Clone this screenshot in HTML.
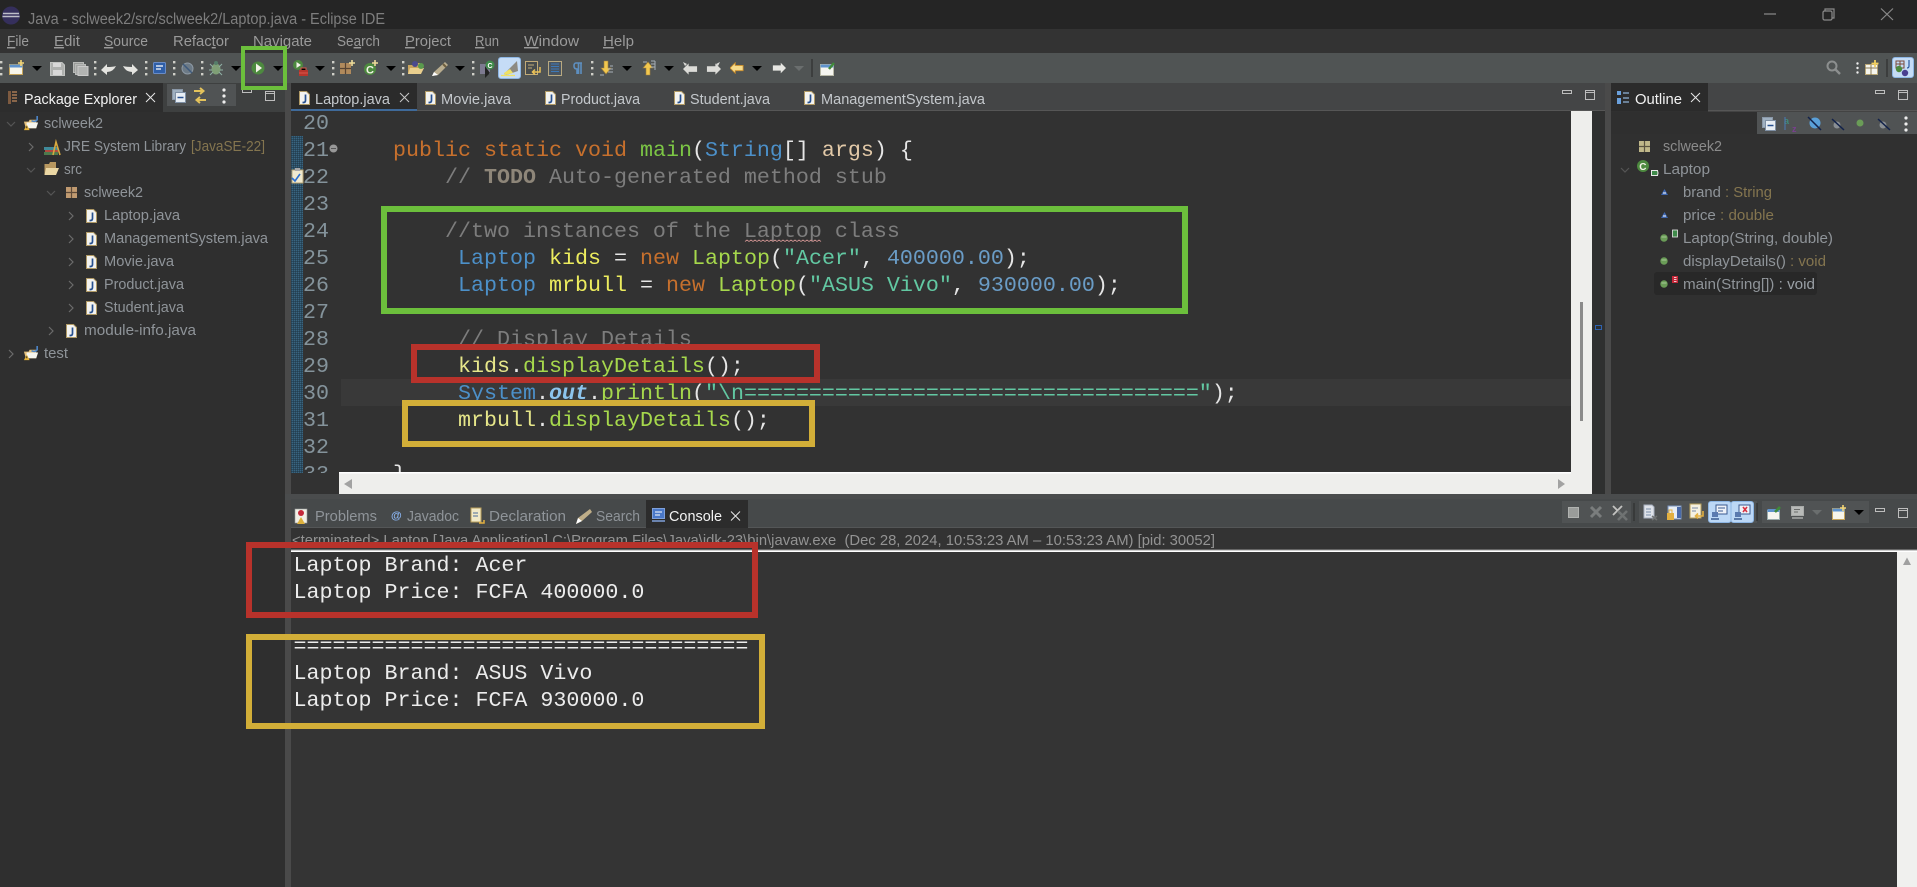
<!DOCTYPE html>
<html lang="en">
<head>
<meta charset="utf-8">
<title>Java - sclweek2/src/sclweek2/Laptop.java - Eclipse IDE</title>
<style>
html,body{margin:0;padding:0;background:#303030;overflow:hidden;width:1917px;height:887px}
svg{display:block}
text{white-space:pre}
.s{font-family:"Liberation Sans",sans-serif;font-size:14.5px;fill:#8f9499}
.m{font-family:"Liberation Sans",sans-serif;font-size:14.5px;fill:#9a9a9a}
.w{font-family:"Liberation Sans",sans-serif;font-size:14.5px;fill:#f2f2f2}
.e{font-family:"Liberation Sans",sans-serif;font-size:14.5px;fill:#c4c8cc}
.o{font-family:"Liberation Sans",sans-serif;font-size:14.5px;fill:#84754f}
.c{font-family:"Liberation Mono",monospace;font-size:21.667px;fill:#e6e6e6}
.n{fill:#84939b}
.k{fill:#c7702d}
.cm{fill:#7d7d7d}
.ty{fill:#4c90c9}
.v{fill:#ecec5e}
.f{fill:#a6d84c}
.st{fill:#62c8a2}
.nu{fill:#6a9cc6}
</style>
</head>
<body>
<svg xmlns="http://www.w3.org/2000/svg" width="1917" height="887" viewBox="0 0 1917 887">
<defs>
<pattern id="hatch" width="2" height="2" patternUnits="userSpaceOnUse"><rect width="2" height="2" fill="#2a4c62"/><rect width="1" height="1" fill="#3a6580"/><rect x="1" y="1" width="1" height="1" fill="#253f50"/></pattern>
<symbol id="file" viewBox="0 0 11 14" overflow="visible"><path d="M.5.5H7.5L10.5 3.5V13.5H.5Z" fill="#f3f3f0" stroke="#b09a66"/><path d="M6.5 3.5V9.5Q6.5 11.5 4.5 11.5H3.5" fill="none" stroke="#27508f" stroke-width="1.7"/></symbol>
<symbol id="minb" viewBox="0 0 10 5"><rect x=".5" y=".5" width="9" height="3" fill="none" stroke="#bdbdbd"/></symbol>
<symbol id="maxb" viewBox="0 0 10 10"><rect x=".5" y=".5" width="9" height="9" fill="none" stroke="#bdbdbd"/><path d="M0 2.5H10" stroke="#bdbdbd"/></symbol>
<symbol id="dots" viewBox="0 0 3 16"><rect x="0" y="0" width="2.4" height="2.4" fill="#cfcfc8"/><rect x="0" y="6" width="2.4" height="2.4" fill="#cfcfc8"/><rect x="0" y="12" width="2.4" height="2.4" fill="#cfcfc8"/></symbol>
<symbol id="vdots" viewBox="0 0 4 16"><circle cx="2" cy="2" r="1.6" fill="#eee"/><circle cx="2" cy="8" r="1.6" fill="#eee"/><circle cx="2" cy="14" r="1.6" fill="#eee"/></symbol>
<symbol id="drop" viewBox="0 0 10 5"><path d="M0 0H10L5 5Z" fill="#000"/></symbol>
<symbol id="proj" viewBox="0 0 18 18"><path d="M1 7H6L7 5H14V14H3Z" fill="#e6c27c"/><path d="M4 8H16L14 14H3Z" fill="#f5f5ee"/><path d="M9 6Q13 8 15 5V1" fill="none" stroke="#4d86c8" stroke-width="1.7"/><path d="M4 10L7 16H1Z" fill="#e7b53a"/><path d="M4 12V14" stroke="#222"/></symbol>
<symbol id="chev" viewBox="0 0 6 10"><path d="M1 1L5 5L1 9" fill="none" stroke="#6b6b6b" stroke-width="1.2"/></symbol>
<symbol id="chevd" viewBox="0 0 10 6"><path d="M1 1L5 5L9 1" fill="none" stroke="#555" stroke-width="1.2"/></symbol>
<symbol id="collapse" viewBox="0 0 14 14"><rect x=".5" y=".5" width="10" height="10" fill="#9fb0c0" stroke="#8a98a8"/><rect x="3.5" y="3.5" width="10" height="10" fill="#e8eef4" stroke="#7f90a5"/><path d="M5.5 8.5H11.5" stroke="#27508f" stroke-width="1.5"/></symbol>
<symbol id="arrow" viewBox="0 0 16 12"><path d="M0 6L6 0V3H15V9H6V12Z"/></symbol>
<symbol id="gb" viewBox="0 0 10 10"><circle cx="5" cy="5" r="3.7" fill="#6a9c57"/><path d="M2.5 4H7.5" stroke="#a8ca98"/></symbol>
</defs>

<!-- base -->
<rect width="1917" height="887" fill="#303030"/>
<rect y="0" width="1917" height="29" fill="#252525"/>
<rect y="29" width="1917" height="24" fill="#333333"/>
<rect y="53" width="1917" height="30" fill="#505454"/>

<!-- title bar -->
<circle cx="11" cy="15.500" r="9" fill="#352f5c"/><path d="M3 13.500H19M2.500 16.500H19.500" stroke="#bdbdc8" stroke-width="1.5"/>
<text x="28" y="24" class="m" style="font-size:15.5px;fill:#7e7e7e" textLength="357" lengthAdjust="spacingAndGlyphs">Java - sclweek2/src/sclweek2/Laptop.java - Eclipse IDE</text>
<path d="M1764 14H1776" stroke="#8a8a8a" stroke-width="1.2"/>
<rect x="1823" y="11" width="9" height="9" rx="1.5" fill="none" stroke="#8a8a8a" stroke-width="1.2"/><path d="M1825 11V9H1834V18H1832" fill="none" stroke="#8a8a8a" stroke-width="1.2"/>
<path d="M1881 8.500L1893 20M1893 8.500L1881 20" stroke="#8a8a8a" stroke-width="1.2"/>

<!-- menu -->
<g class="mn">
<text x="7" y="46" class="m" textLength="22" lengthAdjust="spacingAndGlyphs"><tspan text-decoration="underline">F</tspan>ile</text>
<text x="54" y="46" class="m" textLength="26" lengthAdjust="spacingAndGlyphs"><tspan text-decoration="underline">E</tspan>dit</text>
<text x="104" y="46" class="m" textLength="44" lengthAdjust="spacingAndGlyphs"><tspan text-decoration="underline">S</tspan>ource</text>
<text x="173" y="46" class="m" textLength="56" lengthAdjust="spacingAndGlyphs">Refac<tspan text-decoration="underline">t</tspan>or</text>
<text x="253" y="46" class="m" textLength="59" lengthAdjust="spacingAndGlyphs"><tspan text-decoration="underline">N</tspan>avigate</text>
<text x="337" y="46" class="m" textLength="43" lengthAdjust="spacingAndGlyphs">Se<tspan text-decoration="underline">a</tspan>rch</text>
<text x="405" y="46" class="m" textLength="46" lengthAdjust="spacingAndGlyphs"><tspan text-decoration="underline">P</tspan>roject</text>
<text x="475" y="46" class="m" textLength="24" lengthAdjust="spacingAndGlyphs"><tspan text-decoration="underline">R</tspan>un</text>
<text x="524" y="46" class="m" textLength="55" lengthAdjust="spacingAndGlyphs"><tspan text-decoration="underline">W</tspan>indow</text>
<text x="603" y="46" class="m" textLength="31" lengthAdjust="spacingAndGlyphs"><tspan text-decoration="underline">H</tspan>elp</text>
</g>

<!-- main toolbar -->
<use href="#dots" x="0" y="61" width="3" height="16"/><use href="#dots" x="94" y="61" width="3" height="16"/><use href="#dots" x="145" y="61" width="3" height="16"/><use href="#dots" x="173" y="61" width="3" height="16"/><use href="#dots" x="201" y="61" width="3" height="16"/><use href="#dots" x="332" y="61" width="3" height="16"/><use href="#dots" x="402" y="61" width="3" height="16"/><use href="#dots" x="472" y="61" width="3" height="16"/><use href="#dots" x="591" y="61" width="3" height="16"/>
<!-- new -->
<rect x="9.500" y="64.500" width="13" height="10" fill="#f7f5ea" stroke="#c5a45a"/><rect x="9.500" y="64.500" width="13" height="3" fill="#5f93cd"/><path d="M21 60V66M18 63H24" stroke="#f5d676" stroke-width="1.6"/>
<use href="#drop" x="32" y="66" width="10" height="5"/>
<!-- save -->
<path d="M50.500 62.500H62L64.500 65V75.500H50.500Z" fill="#aeb0ae" stroke="#c2c4c2"/><rect x="53" y="63" width="8" height="4" fill="#d8d8d8"/><rect x="53" y="70" width="9" height="5" fill="#d8d8d8"/>
<!-- save all -->
<rect x="73.500" y="62.500" width="10" height="10" fill="#9a9c9a" stroke="#b8bab8"/><rect x="75.500" y="64.500" width="10" height="10" fill="#a4a6a4" stroke="#b8bab8"/><rect x="78" y="66.500" width="10" height="9" fill="#b2b4b2" stroke="#cacaca"/>
<!-- undo/redo -->
<path d="M101 70L107 75V72Q113 72 116 66Q113 67 107 67V64Z" fill="#e4e4e0"/><path d="M138 70L132 75V72Q126 72 123 66Q126 67 132 67V64Z" fill="#e4e4e0"/>
<!-- console -->
<rect x="153.500" y="62.500" width="12" height="11" rx="1" fill="#2f5fa8" stroke="#6a8cc6"/><path d="M156 66H163M156 69H161" stroke="#fff" stroke-width="1.2"/>
<!-- skip -->
<circle cx="187.500" cy="68.500" r="5.500" fill="#6c7a86" stroke="#8d99a4"/><path d="M183 64L192 73" stroke="#3e5a7c" stroke-width="1.5"/>
<!-- bug -->
<ellipse cx="216" cy="69" rx="4.500" ry="5.500" fill="#7f9f76"/><circle cx="216" cy="63" r="2" fill="#557e6a"/><path d="M210 64L213 67M222 64L219 67M209 70H212M223 70H220M210 75L213 72M222 75L219 72" stroke="#8fb0a5"/>
<use href="#drop" x="231" y="66" width="10" height="5"/>
<!-- run -->
<circle cx="258" cy="68" r="6.500" fill="#4d8a3f"/><path d="M256 63.500L262 68L256 72.500Z" fill="#f3f3e8"/>
<use href="#drop" x="273" y="66" width="10" height="5"/>
<!-- ext tools -->
<circle cx="298" cy="65" r="5" fill="#4d8a3f"/><path d="M296.500 62L301 65L296.500 68Z" fill="#f3f3e8"/><rect x="299" y="70" width="9" height="6" fill="#b8352c"/><path d="M301 70V68H306V70M299 73H308" stroke="#d8564a"/>
<use href="#drop" x="315" y="66" width="10" height="5"/>
<!-- new pkg -->
<rect x="340" y="63" width="11" height="11" fill="#b08a5c"/><path d="M345.500 63V74M340 68.500H351" stroke="#574433" stroke-width="1.2"/><path d="M352 60V66M349 63H355" stroke="#eedc9a" stroke-width="1.6"/>
<!-- new class -->
<circle cx="370" cy="69" r="6" fill="#4d8a3f"/><text x="366" y="73.500" style="font:bold 11px 'Liberation Sans',sans-serif;fill:#f3f3e8">C</text><path d="M375 60V66M372 63H378" stroke="#eedc9a" stroke-width="1.6"/>
<use href="#drop" x="386" y="66" width="10" height="5"/>
<!-- open -->
<path d="M408 74V65H413L414 63H420V74Z" fill="#c9a55f"/><path d="M410 68H424L421 74H408Z" fill="#e9cf8e"/><circle cx="415" cy="64" r="3" fill="#4a4a8e"/><circle cx="421" cy="66" r="3" fill="#5a9a4d"/>
<!-- pencil -->
<path d="M445 62L448 65L438 75L432 76L434 72Z" fill="#b9ad8f"/><path d="M432 76L434 72L438 75Z" fill="#fff"/><path d="M443 64L446 67" stroke="#6e5e3f" stroke-width="2"/>
<use href="#drop" x="455" y="66" width="10" height="5"/>
<!-- open type -->
<rect x="480" y="64" width="10" height="10" fill="#7d7a90"/><path d="M485 66V78L490 73Z" fill="#222"/><circle cx="490" cy="65" r="4.500" fill="#3f8a4a"/><text x="487.500" y="68" style="font:bold 7px 'Liberation Sans',sans-serif;fill:#fff">C</text>
<!-- highlight toggle -->
<rect x="498.500" y="57.500" width="22" height="21" rx="2.500" fill="#c5dcf6" stroke="#8db6e4"/><path d="M517 61L518 71L506 75L504 74Z" fill="#8d8a82"/><path d="M504 73L510 69L513 73L505 75Z" fill="#efe165"/><path d="M501 75.500H515" stroke="#efe165" stroke-width="1.3"/>
<!-- next annotation -->
<rect x="525.500" y="61.500" width="12" height="13" fill="#484c4c" stroke="#c2ab78"/><path d="M528 65H534M528 68H532" stroke="#c2ab78"/><path d="M540 67V72H533M535 69.500L532.500 72L535 74.500" fill="none" stroke="#ebc257" stroke-width="1.5"/>
<!-- block -->
<rect x="548.500" y="61.500" width="13" height="14" fill="#4a5560" stroke="#b8a980"/><path d="M551 64H559M551 66.500H559M551 69H559M551 71.500H559" stroke="#3d79b8"/>
<!-- pilcrow -->
<path d="M582 63H576Q574 63 574 66Q574 69 577 69V74M578.500 63.500V74M581 63.500V74" fill="none" stroke="#5d8fc0" stroke-width="1.6"/>
<!-- sort down/up -->
<path d="M604 61V68H601L606 74L611 68H608V61Z" fill="#f2c84f" stroke="#a3803a" stroke-width=".6"/><path d="M610 66H613M608 69H613M608 72H613" stroke="#a8b0b8"/><path d="M600 75H604" stroke="#a8b0b8"/>
<use href="#drop" x="622" y="66" width="10" height="5"/>
<path d="M646 75V68H643L648 62L653 68H650V75Z" fill="#f2c84f" stroke="#a3803a" stroke-width=".6"/><path d="M643 62H647M651 61H655M651 64H655M651 67H655M655 70V61" stroke="#a8b0b8"/>
<use href="#drop" x="664" y="66" width="10" height="5"/>
<g fill="#dcdcd8">
<use href="#arrow" x="683" y="63" width="15" height="12"/>
<use href="#arrow" x="-721" y="63" width="15" height="12" transform="scale(-1 1)"/>
<path d="M683 62l4 2-2 2zM720 62l-4 2 2 2z"/>
</g>
<use href="#arrow" x="730" y="62" width="14" height="12" fill="#f7dc8c" stroke="#c58a2a"/>
<use href="#drop" x="752" y="66" width="10" height="5"/>
<use href="#arrow" x="-786" y="62" width="14" height="12" fill="#e6e6e2" transform="scale(-1 1)"/>
<path d="M794 66H804L799 71Z" fill="#6a6e6e"/>
<path d="M812 59V77" stroke="#2e3030" stroke-width="1.2"/>
<rect x="820.500" y="64.500" width="13" height="11" fill="#f5f5f0" stroke="#b9b9a8"/><rect x="820.500" y="64.500" width="13" height="3" fill="#5f93cd"/><path d="M829 69L834 63" stroke="#3f8a3a" stroke-width="2.5"/>
<!-- right toolbar -->
<circle cx="1832" cy="66" r="4.500" fill="none" stroke="#8c8f8f" stroke-width="2"/><path d="M1835 69L1840 74" stroke="#8c8f8f" stroke-width="2.4"/>
<use href="#vdots" x="1856" y="60" width="3" height="16"/>
<rect x="1865.500" y="64.500" width="12" height="10" fill="#f5f5ee" stroke="#b9a878"/><path d="M1865 68H1878M1871 65V75" stroke="#8a7a55"/><path d="M1875 60V67M1871.500 63.500H1878.500" stroke="#f2d060" stroke-width="1.8"/>
<path d="M1887 59V77" stroke="#2e3030" stroke-width="1.2"/>
<rect x="1892.500" y="57.500" width="21" height="20" rx="2.500" fill="#c5dcf6" stroke="#8db6e4"/><path d="M1896 64H1904M1900 61V69M1896 61H1904V68H1896Z" fill="none" stroke="#7a4a3a"/><circle cx="1899" cy="69" r="3.200" fill="#4d8a3f"/><circle cx="1905" cy="73" r="3.200" fill="#4a3f90"/><path d="M1909 60V66Q1909 68 1907 68" fill="none" stroke="#2c5aa0" stroke-width="1.2"/>

<!-- left pane -->
<rect x="0" y="83" width="285" height="804" fill="#2f2f2f"/>
<rect x="163" y="83" width="122" height="29" fill="#3e4040"/>
<rect x="0" y="83" width="163" height="29" fill="#2d2d2d"/>
<rect x="167" y="84" width="69" height="22" fill="#505354"/>
<rect x="8" y="91" width="3" height="13" fill="#7d5a40"/><path d="M12 92H17M12 95H17M12 98H17M12 101H17" stroke="#a87a55" stroke-width="1.5"/>
<text x="24" y="104" class="w" textLength="113" lengthAdjust="spacingAndGlyphs">Package Explorer</text>
<path d="M146 93L155 102M155 93L146 102" stroke="#e8e8e8" stroke-width="1"/>
<use href="#collapse" x="172" y="89" width="14" height="14"/>
<path d="M194 91H203M200 88L203.500 91L200 94M206 100H197M200 97L196.500 100L200 103" fill="none" stroke="#e3c25b" stroke-width="2"/>
<use href="#vdots" x="222" y="88" width="4" height="16"/>
<use href="#minb" x="242" y="89" width="10" height="5"/><use href="#maxb" x="265" y="91" width="10" height="10"/>

<!-- tree -->
<use href="#chevd" x="6" y="121" width="10" height="6"/>
<use href="#proj" x="23" y="115" width="17" height="17"/>
<text x="44" y="128" class="s" textLength="59" lengthAdjust="spacingAndGlyphs">sclweek2</text>
<use href="#chev" x="28" y="142" width="6" height="10"/>
<rect x="44" y="147" width="14" height="3" fill="#3f8a9a"/><rect x="45" y="150" width="13" height="2" fill="#b04a3f"/><rect x="44" y="152" width="14" height="3" fill="#4d7a4d"/><path d="M53 155L56 142L60 155" fill="none" stroke="#d8a93f" stroke-width="1.6"/>
<text x="64" y="151" class="s" textLength="122" lengthAdjust="spacingAndGlyphs">JRE System Library</text>
<text x="191" y="151" class="o" textLength="74" lengthAdjust="spacingAndGlyphs">[JavaSE-22]</text>
<use href="#chevd" x="26" y="167" width="10" height="6"/>
<path d="M44.500 175V164H49L50 162H56V175Z" fill="#b89860"/><path d="M46 168H59L56 175H44.500Z" fill="#ebd7a4"/>
<text x="64" y="174" class="s" textLength="18" lengthAdjust="spacingAndGlyphs">src</text>
<use href="#chevd" x="46" y="190" width="10" height="6"/>
<rect x="66" y="187" width="11" height="11" fill="#c09a70"/><path d="M71.500 187V198M66 192.500H77" stroke="#5e4a38" stroke-width="1.2"/>
<text x="84" y="197" class="s" textLength="59" lengthAdjust="spacingAndGlyphs">sclweek2</text>
<use href="#chev" x="68" y="211" width="6" height="10"/><use href="#file" x="86" y="209" width="11" height="14"/>
<text x="104" y="220" class="s" textLength="76" lengthAdjust="spacingAndGlyphs">Laptop.java</text>
<use href="#chev" x="68" y="234" width="6" height="10"/><use href="#file" x="86" y="232" width="11" height="14"/>
<text x="104" y="243" class="s" textLength="164" lengthAdjust="spacingAndGlyphs">ManagementSystem.java</text>
<use href="#chev" x="68" y="257" width="6" height="10"/><use href="#file" x="86" y="255" width="11" height="14"/>
<text x="104" y="266" class="s" textLength="70" lengthAdjust="spacingAndGlyphs">Movie.java</text>
<use href="#chev" x="68" y="280" width="6" height="10"/><use href="#file" x="86" y="278" width="11" height="14"/>
<text x="104" y="289" class="s" textLength="80" lengthAdjust="spacingAndGlyphs">Product.java</text>
<use href="#chev" x="68" y="303" width="6" height="10"/><use href="#file" x="86" y="301" width="11" height="14"/>
<text x="104" y="312" class="s" textLength="80" lengthAdjust="spacingAndGlyphs">Student.java</text>
<use href="#chev" x="48" y="326" width="6" height="10"/><use href="#file" x="66" y="324" width="11" height="14"/>
<text x="84" y="335" class="s" textLength="112" lengthAdjust="spacingAndGlyphs">module-info.java</text>
<use href="#chev" x="8" y="349" width="6" height="10"/><use href="#proj" x="23" y="345" width="17" height="17"/>
<text x="44" y="358" class="s" textLength="24" lengthAdjust="spacingAndGlyphs">test</text>

<!-- sashes -->
<rect x="285" y="83" width="6" height="804" fill="#4a4a4a"/>
<rect x="1605" y="83" width="6" height="411" fill="#4a4a4a"/>

<!-- editor tabs -->
<rect x="291" y="83" width="1314" height="28" fill="#444546"/>
<rect x="291" y="83" width="126" height="26" fill="#2b2b2b"/>
<rect x="291" y="109" width="126" height="2" fill="#3f6a9a"/>
<rect x="417" y="110" width="1188" height="1.500" fill="#565656"/>
<use href="#file" x="299" y="91" width="11" height="14"/>
<text x="315" y="104" class="e" textLength="75" lengthAdjust="spacingAndGlyphs">Laptop.java</text>
<path d="M400 93L409 102M409 93L400 102" stroke="#c8c8c8"/>
<use href="#file" x="425" y="91" width="11" height="14"/>
<text x="441" y="104" class="e" textLength="70" lengthAdjust="spacingAndGlyphs">Movie.java</text>
<use href="#file" x="545" y="91" width="11" height="14"/>
<text x="561" y="104" class="e" textLength="79" lengthAdjust="spacingAndGlyphs">Product.java</text>
<use href="#file" x="674" y="91" width="11" height="14"/>
<text x="690" y="104" class="e" textLength="80" lengthAdjust="spacingAndGlyphs">Student.java</text>
<use href="#file" x="804" y="91" width="11" height="14"/>
<text x="821" y="104" class="e" textLength="164" lengthAdjust="spacingAndGlyphs">ManagementSystem.java</text>
<use href="#minb" x="1562" y="90" width="10" height="5"/><use href="#maxb" x="1585" y="90" width="10" height="10"/>

<!-- editor body -->
<rect x="291" y="111" width="1314" height="383" fill="#323232"/>
<rect x="291" y="136" width="12" height="337" fill="url(#hatch)"/>
<rect x="341" y="379" width="1230" height="27" fill="#393939"/>

<svg x="291" y="111" width="1280" height="362" viewBox="291 111 1280 362">
<g class="c" transform="translate(-1 -1)">
<text x="304" y="130" class="n">20</text>
<text x="304" y="157" class="n">21</text>
<text x="304" y="184" class="n">22</text>
<text x="304" y="211" class="n">23</text>
<text x="304" y="238" class="n">24</text>
<text x="304" y="265" class="n">25</text>
<text x="304" y="292" class="n">26</text>
<text x="304" y="319" class="n">27</text>
<text x="304" y="346" class="n">28</text>
<text x="304" y="373" class="n">29</text>
<text x="304" y="400" class="n">30</text>
<text x="304" y="427" class="n">31</text>
<text x="304" y="454" class="n">32</text>
<text x="304" y="481" class="n">33</text>
<text x="394" y="157"><tspan class="k">public</tspan> <tspan class="k">static</tspan> <tspan class="k">void</tspan> <tspan style="fill:#7cc645">main</tspan>(<tspan class="ty">String</tspan>[] <tspan style="fill:#e2c9a8">args</tspan>) {</text>
<text x="446" y="184" class="cm">// <tspan style="font-weight:bold;fill:#8e8679">TODO</tspan> Auto-generated method stub</text>
<text x="446" y="238" class="cm">//two instances of the Laptop class</text>
<text x="459" y="265"><tspan class="ty">Laptop</tspan> <tspan class="v">kids</tspan> = <tspan class="k">new</tspan> <tspan class="f">Laptop</tspan>(<tspan class="st">"Acer"</tspan>, <tspan class="nu">400000.00</tspan>);</text>
<text x="459" y="292"><tspan class="ty">Laptop</tspan> <tspan class="v">mrbull</tspan> = <tspan class="k">new</tspan> <tspan class="f">Laptop</tspan>(<tspan class="st">"ASUS Vivo"</tspan>, <tspan class="nu">930000.00</tspan>);</text>
<text x="459" y="346" class="cm">// Display Details</text>
<text x="459" y="373"><tspan style="fill:#e6e68a">kids</tspan>.<tspan class="f">displayDetails</tspan>();</text>
<text x="459" y="400"><tspan class="ty">System</tspan>.<tspan style="fill:#8cc4ec;font-weight:bold;font-style:italic">out</tspan>.<tspan class="f">println</tspan>(<tspan class="st">"\n==================================="</tspan>);</text>
<text x="459" y="427"><tspan style="fill:#e6e68a">mrbull</tspan>.<tspan class="f">displayDetails</tspan>();</text>
<text x="394" y="481">}</text>
</g>
</svg>

<circle cx="333.500" cy="148.500" r="4" fill="#989898"/><path d="M331 148.500H336" stroke="#555" stroke-width="1"/>
<rect x="292" y="170" width="11" height="13" fill="#efe9cf" stroke="#b9a878"/><rect x="295" y="168" width="5" height="3" fill="#a8a8a8"/><path d="M292 178L295 181L300 174" fill="none" stroke="#2a6fd0" stroke-width="1.6"/>
<path d="M745 241.500l2 -1.500 2 1.500 2 -1.500 2 1.500 2 -1.500 2 1.500 2 -1.500 2 1.500 2 -1.500 2 1.500 2 -1.500 2 1.500 2 -1.500 2 1.500 2 -1.500 2 1.500 2 -1.500 2 1.500 2 -1.500 2 1.500 2 -1.500 2 1.500 2 -1.500 2 1.500 2 -1.500 2 1.500 2 -1.500 2 1.500 2 -1.500 2 1.500 2 -1.500 2 1.500 2 -1.500 2 1.500 2 -1.500 2 1.500 2 -1.500 2 1.500" fill="none" stroke="#c9908e" stroke-width=".8"/>

<!-- editor scrollbars -->
<rect x="1571" y="111" width="21" height="383" fill="#eeeeec"/>
<rect x="1580" y="302" width="3" height="119" fill="#8a8a8a"/>
<rect x="339" y="473" width="1253" height="21" fill="#eeeeec"/>
<rect x="339" y="472" width="1232" height="1.500" fill="#fff"/>
<path d="M344 484L352 479V489Z" fill="#a2a2a2"/><path d="M1565 484L1558 479V489Z" fill="#a2a2a2"/>
<rect x="1592" y="111" width="13" height="383" fill="#2f3030"/>
<rect x="1595.500" y="325.500" width="6" height="4" fill="none" stroke="#2f62b0"/>

<!-- outline -->
<rect x="1611" y="83" width="306" height="28" fill="#444546"/>
<rect x="1611" y="83" width="97" height="28" fill="#2b2b2b"/>
<rect x="1708" y="110" width="209" height="1.500" fill="#565656"/>
<rect x="1611" y="112" width="306" height="22" fill="#2f2f2f"/>
<rect x="1757" y="112" width="160" height="22" fill="#505354"/>
<rect x="1617" y="91" width="4" height="4" fill="#6aa0dc"/><rect x="1617" y="98" width="4" height="4" fill="#6aa0dc"/><rect x="1617" y="100" width="4" height="4" fill="#6aa0dc"/><path d="M1623 93H1629M1623 98H1629M1623 102H1629" stroke="#8fb4d8" stroke-width="1.3"/>
<text x="1635" y="104" class="w" textLength="47" lengthAdjust="spacingAndGlyphs">Outline</text>
<path d="M1691 93L1700 102M1700 93L1691 102" stroke="#e8e8e8"/>
<use href="#minb" x="1875" y="90" width="10" height="5"/><use href="#maxb" x="1898" y="90" width="10" height="10"/>
<use href="#collapse" x="1762" y="117" width="14" height="14"/>
<text x="1784" y="124" style="font:bold 9px 'Liberation Sans',sans-serif;fill:#3f8a7a">a</text><text x="1792" y="132" style="font:bold 9px 'Liberation Sans',sans-serif;fill:#7a3f90">z</text><path d="M1785 117V130" stroke="#4a7ab8"/>
<circle cx="1815" cy="123" r="5.500" fill="#5aa0d8"/><path d="M1808 117L1821 130" stroke="#12224a" stroke-width="1.5"/>
<circle cx="1837" cy="125" r="3.500" fill="#8a8f94"/><path d="M1832 119L1844 130" stroke="#12224a" stroke-width="1.5"/>
<circle cx="1860" cy="123" r="3.500" fill="#6a9c57"/>
<circle cx="1883" cy="125" r="3.500" fill="#8a8f94"/><path d="M1878 119L1890 130" stroke="#12224a" stroke-width="1.5"/>
<use href="#vdots" x="1904" y="116" width="4" height="16"/>

<rect x="1654" y="272" width="163" height="23" rx="3" fill="#282828"/>
<rect x="1639" y="141" width="11" height="11" fill="#c0b88a"/><path d="M1644.500 141V152M1639 146.500H1650" stroke="#5a5440" stroke-width="1.2"/>
<text x="1663" y="151" class="s" textLength="59" lengthAdjust="spacingAndGlyphs" style="fill:#8b8b8b">sclweek2</text>
<use href="#chevd" x="1620" y="167" width="10" height="6"/>
<circle cx="1643" cy="166" r="6" fill="#4d8a3f"/><text x="1639.300" y="170" style="font:bold 10px 'Liberation Sans',sans-serif;fill:#f3f3e8">C</text>
<path d="M1651.500 170.500H1657.500L1658 173L1657.500 175.500H1651.500Z" fill="#3f8a4a" stroke="#e8e8e8"/>
<text x="1663" y="174" class="s" textLength="47" lengthAdjust="spacingAndGlyphs">Laptop</text>
<path d="M1661 195L1664.500 189L1668 195Z" fill="#3f67b0"/><path d="M1663 193H1666" stroke="#fff"/>
<text x="1683" y="197" class="s" textLength="89" lengthAdjust="spacingAndGlyphs">brand<tspan style="fill:#84754f"> : String</tspan></text>
<path d="M1661 218L1664.500 212L1668 218Z" fill="#3f67b0"/><path d="M1663 216H1666" stroke="#fff"/>
<text x="1683" y="220" class="s" textLength="91" lengthAdjust="spacingAndGlyphs">price<tspan style="fill:#84754f"> : double</tspan></text>
<use href="#gb" x="1659" y="233" width="10" height="10"/>
<rect x="1672.500" y="230" width="5" height="7" fill="#3f8a4a" stroke="#e8e8e8" stroke-width=".8"/>
<text x="1683" y="243" class="s" textLength="150" lengthAdjust="spacingAndGlyphs">Laptop(String, double)</text>
<use href="#gb" x="1659" y="256" width="10" height="10"/>
<text x="1683" y="266" class="s" textLength="143" lengthAdjust="spacingAndGlyphs">displayDetails()<tspan style="fill:#84754f"> : void</tspan></text>
<use href="#gb" x="1659" y="279" width="10" height="10"/>
<rect x="1672" y="276" width="6" height="7" fill="#c4283a"/><path d="M1674 277.500H1676.500M1674 279.500H1676.500M1674 281.500H1676.500" stroke="#fff" stroke-width=".7"/>
<text x="1683" y="289" class="s" textLength="132" lengthAdjust="spacingAndGlyphs">main(String[])<tspan style="fill:#9aa0a6"> : void</tspan></text>

<!-- console tab bar -->
<rect x="285" y="494" width="1632" height="6" fill="#4a4c4d"/>
<rect x="291" y="499" width="1626" height="29" fill="#46494a"/>
<rect x="291" y="527" width="1626" height="1.500" fill="#545657"/>
<rect x="646" y="500" width="102" height="28" fill="#2c2c2c"/>
<rect x="295" y="509" width="12" height="14" fill="#f1efe6" stroke="#999" stroke-width=".6"/><circle cx="301" cy="513" r="3" fill="#c4283a"/><path d="M301 517L305 524H297Z" fill="#dcb03c"/>
<text x="315" y="521" class="s" textLength="62" lengthAdjust="spacingAndGlyphs">Problems</text>
<text x="391" y="519" style="font:bold 11px 'Liberation Sans',sans-serif;fill:#8ab4f0">@</text>
<text x="407" y="521" class="s" textLength="52" lengthAdjust="spacingAndGlyphs">Javadoc</text>
<rect x="471" y="508" width="10" height="14" fill="#f1e9c8" stroke="#b9a05a"/><path d="M473 513H478M473 516H478" stroke="#4a6a9a"/><path d="M484 520V523H479" fill="none" stroke="#e3b040" stroke-width="1.5"/>
<text x="489" y="521" class="s" textLength="77" lengthAdjust="spacingAndGlyphs">Declaration</text>
<path d="M590 509L592 512L582 521L576 524L578 518Z" fill="#bfae88"/><path d="M576 524L578 518L582 521Z" fill="#fff"/>
<text x="596" y="521" class="s" textLength="44" lengthAdjust="spacingAndGlyphs">Search</text>
<rect x="652.500" y="508.500" width="12" height="10" fill="#4a78c8" stroke="#7ea0da"/><path d="M655 512H662M655 515H660" stroke="#fff"/><path d="M652 521H665" stroke="#7ea0da" stroke-width="1.5"/>
<text x="669" y="521" class="w" textLength="53" lengthAdjust="spacingAndGlyphs">Console</text>
<path d="M731 511.500L740 520.500M740 511.500L731 520.500" stroke="#e8e8e8"/>
<!-- console toolbar -->
<rect x="1562" y="501" width="69" height="22" fill="#505354"/>
<rect x="1639" y="501" width="118" height="22" fill="#505354"/>
<rect x="1762" y="501" width="107" height="22" fill="#505354"/>
<rect x="1568.500" y="507.500" width="10" height="10" fill="#9a9c9a" stroke="#b0b2b0"/>
<path d="M1591 507L1601 517M1601 507L1591 517" stroke="#7a7d7d" stroke-width="3"/>
<path d="M1613 506L1622 515M1622 506L1613 515" stroke="#c2c2c0" stroke-width="1.8"/><path d="M1618 511L1627 520M1627 511L1618 520" stroke="#6f7272" stroke-width="2.6"/>
<path d="M1634 503V521" stroke="#2e3030" stroke-width="1.2"/>
<path d="M1644 505H1652L1654 507V518H1644Z" fill="#dfe3ea" stroke="#a8b0c0"/><path d="M1646 509H1651M1646 512H1651M1646 515H1651" stroke="#7a8ca8"/><path d="M1652 516L1657 520M1657 516L1652 520" stroke="#6f7272" stroke-width="1.5"/>
<rect x="1668" y="506" width="13" height="13" fill="#e8eef4" stroke="#7a94c0"/><rect x="1677" y="507" width="4" height="11" fill="#4a6aa8"/><rect x="1667" y="513" width="7" height="7" fill="#e3b040"/><path d="M1669 513V510H1672V513" fill="none" stroke="#e3b040"/>
<rect x="1690" y="504" width="11" height="14" fill="#f5f1e2" stroke="#b9a05a"/><path d="M1692 508H1698M1692 511H1696" stroke="#7a8ca8"/><path d="M1703 511V516H1696M1698 513.500L1695.500 516L1698 518.500" fill="none" stroke="#e3b040" stroke-width="1.6"/>
<rect x="1708.500" y="501.500" width="22.500" height="21" rx="2.500" fill="#bcd8f6" stroke="#8db6e4"/>
<rect x="1731" y="501.500" width="22.500" height="21" rx="2.500" fill="#bcd8f6" stroke="#8db6e4"/>
<rect x="1716" y="505" width="11" height="9" fill="#eef2f8" stroke="#3a5a90"/><path d="M1718 508H1725M1718 511H1723" stroke="#3a5a90"/><rect x="1712" y="512" width="6" height="5" fill="#5a7ab0"/><path d="M1711 519H1719" stroke="#3a5a90" stroke-width="1.5"/>
<rect x="1739" y="505" width="11" height="9" fill="#eef2f8" stroke="#3a5a90"/><path d="M1743 507L1747 512M1747 507L1743 512" stroke="#d83040" stroke-width="1.6"/><rect x="1735" y="512" width="6" height="5" fill="#5a7ab0"/><path d="M1734 519H1742" stroke="#3a5a90" stroke-width="1.5"/>
<path d="M1757 503V521" stroke="#2e3030" stroke-width="1.2"/>
<rect x="1767.500" y="510.500" width="12" height="9" fill="#f5f5f0" stroke="#9aa"/><rect x="1767.500" y="509" width="12" height="3" fill="#5f93cd"/><path d="M1775 512L1780 507" stroke="#3f8a3a" stroke-width="2.6"/>
<rect x="1791.500" y="506.500" width="12" height="9" fill="#b8bab8" stroke="#a8aaa8"/><path d="M1794 509.500H1800M1794 512H1798" stroke="#6a6c6a"/><path d="M1792 518H1803" stroke="#a8aaa8" stroke-width="1.5"/>
<path d="M1812 510H1822L1817 515Z" fill="#6a6e6e"/>
<rect x="1832.500" y="508.500" width="12" height="11" fill="#f7f5ea" stroke="#c5a45a"/><rect x="1832.500" y="508.500" width="12" height="3" fill="#5f93cd"/><path d="M1843 505V511M1840 508H1846" stroke="#f5d676" stroke-width="1.6"/>
<use href="#drop" x="1854" y="510" width="10" height="5"/>
<use href="#minb" x="1875" y="508" width="10" height="5"/><use href="#maxb" x="1898" y="508" width="10" height="10"/>

<!-- console -->
<rect x="291" y="528" width="1626" height="22" fill="#333"/>
<text x="292" y="545" class="s" style="fill:#939393" textLength="923" lengthAdjust="spacingAndGlyphs">&lt;terminated&gt; Laptop [Java Application] C:\Program Files\Java\jdk-23\bin\javaw.exe  (Dec 28, 2024, 10:53:23 AM – 10:53:23 AM) [pid: 30052]</text>
<rect x="291" y="549.500" width="1626" height="1" fill="#9a9a9a"/>
<rect x="291" y="550.500" width="1626" height="1.500" fill="#fff"/>
<rect x="291" y="552" width="1606" height="335" fill="#343434"/>
<rect x="1897" y="552" width="20" height="335" fill="#f0f0ee"/>
<path d="M1903 565L1907 557.500L1911 565Z" fill="#a0a0a0"/>
<g class="c" style="fill:#ececec" transform="translate(-1 -1)">
<text x="294.500" y="572">Laptop Brand: Acer</text>
<text x="294.500" y="599">Laptop Price: FCFA 400000.0</text>
<text x="294.500" y="653">===================================</text>
<text x="294.500" y="680">Laptop Brand: ASUS Vivo</text>
<text x="294.500" y="707">Laptop Price: FCFA 930000.0</text>
</g>

<!-- annotation boxes -->
<g fill="none" stroke-width="6">
<rect x="384" y="209" width="801" height="102" stroke="#6cbf3c"/>
<rect x="414" y="347" width="403" height="33" stroke="#b8322b"/>
<rect x="405" y="403" width="407" height="41" stroke="#d2ae38"/>
<rect x="249" y="545" width="506" height="70" stroke="#b8322b"/>
<rect x="249" y="637" width="513" height="89" stroke="#d2ae38"/>
<rect x="243" y="48" width="42" height="40" stroke="#6cbf3c" stroke-width="4"/>
</g>
</svg>
</body>
</html>
